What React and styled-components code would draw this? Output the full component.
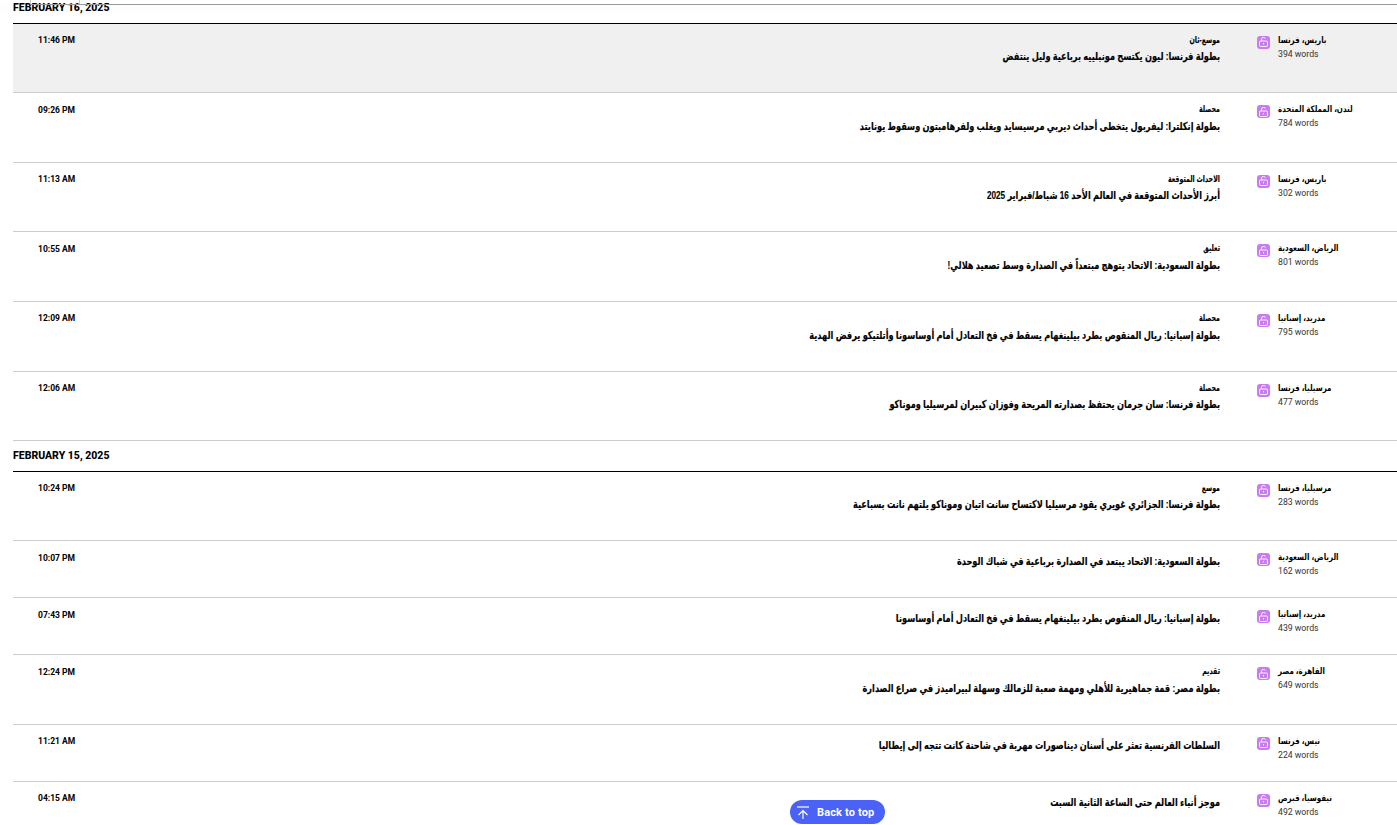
import React from 'react'
import styled, { createGlobalStyle } from 'styled-components'

const GlobalStyle = createGlobalStyle`
  html, body {
    margin: 0;
    padding: 0;
    background: #fff;
    overflow: hidden;
  }
`

const Viewport = styled.div`
  position: relative;
  height: 825px;
  overflow: hidden;
  font-family: Roboto, 'Open Sans', sans-serif;
  color: #000;
`

// sticky bar of the site, only its bottom edge is still visible
const StickyBar = styled.div`
  position: absolute;
  top: 0;
  left: 0;
  right: 0;
  height: 5px;
  padding-left: 30px;
  box-shadow: 0 4px 12px rgba(0, 0, 0, 0.03);
`

const StickyEdge = styled.div`
  height: 4px;
  border-bottom: 1px solid #999;
`

const StickyTab = styled.div`
  width: 50px;
  height: 4px;
  box-sizing: border-box;
  border-left: 1px solid #ccc;
  border-right: 1px solid #ccc;
`

const Content = styled.div`
  margin-top: -6.7px;
  padding-left: 13px;
`

const DateTitle = styled.h2`
  margin: 0;
  height: 29.4px;
  border-bottom: 1px solid #000;
  box-sizing: content-box;
  font-size: 10.5px;
  font-weight: 800;
  line-height: 30px;
  text-transform: uppercase;
`

const Row = styled.div`
  display: grid;
  grid-template-columns: 60px 1122px 58px 1fr;
  box-sizing: border-box;
  padding: 10px 0 0 25px;
  border-bottom: 1px solid #ccc;
  background: ${p => (p.$active ? '#f0f0f0' : 'transparent')};
`

const Time = styled.div`
  padding-top: 0.4px;
  white-space: nowrap;
  font-size: 8.5px;
  font-weight: 700;
  line-height: 13px;
`

const Story = styled.div`
  direction: rtl;
  padding-bottom: 27px;
  font-family: 'Liberation Sans', 'DejaVu Sans', sans-serif;
  font-weight: 700;
  -webkit-text-stroke: 0.15px #000;
`

const Category = styled.div`
  font-size: 9px;
  line-height: 12.6px;
  transform: scaleX(0.7);
  transform-origin: right center;
`

const Headline = styled.div`
  font-size: 11px;
  line-height: 17px;
  margin-top: 2px;
  white-space: nowrap;
  transform: scaleX(0.745);
  transform-origin: right center;
`

const Lock = styled.span`
  display: flex;
  align-items: center;
  justify-content: center;
  width: 13px;
  height: 13px;
  margin: 2px 0 0 37px;
  border-radius: 3px;
  background: #c97cf0;
  color: #fff;
`

const Meta = styled.div`
  min-width: 0;
`

const Place = styled.div`
  font-family: 'Liberation Sans', 'DejaVu Sans', sans-serif;
  font-size: 9px;
  font-weight: 700;
  line-height: 13px;
  white-space: nowrap;
  unicode-bidi: plaintext;
  text-align: left;
  transform: scaleX(0.79);
  transform-origin: left center;
`

const Words = styled.div`
  font-size: 8.7px;
  line-height: 15px;
  color: #333;
`

const BackToTop = styled.button`
  position: absolute;
  left: 790px;
  top: 800px;
  display: flex;
  align-items: center;
  gap: 8px;
  width: 95px;
  height: 24px;
  padding: 0 0 0 7px;
  border: 0;
  border-radius: 12px;
  background: #4a62f8;
  color: #fff;
  font-family: Roboto, sans-serif;
  font-size: 11px;
  font-weight: 700;
  letter-spacing: 0.15px;
  z-index: 3;
`

const LockIcon = () => (
  <svg width="9" height="10" viewBox="0 0 9 10" fill="none" stroke="currentColor" strokeWidth="0.9">
    <rect x="0.5" y="4" width="8" height="5.5" rx="1" />
    <path d="M2.5 4V2.2a2 2 0 0 1 3.9-.5" />
    <path d="M4.5 6v1.4" />
  </svg>
)

const UpIcon = () => (
  <svg width="12" height="13" viewBox="0 0 12 13" fill="none" stroke="currentColor" strokeWidth="1.2">
    <path d="M0 1h12" />
    <path d="M6 13V4.5M1.5 9L6 4.5 10.5 9" />
  </svg>
)

const feb16 = [
  { time: '11:46 PM', cat: 'موسع-ثان', title: 'بطولة فرنسا: ليون يكتسح مونبلييه برباعية وليل ينتفض', place: 'باريس، فرنسا', words: 394, active: true },
  { time: '09:26 PM', cat: 'محصلة', title: 'بطولة إنكلترا: ليفربول يتخطى أحداث ديربي مرسيسايد ويغلب ولفرهامبتون وسقوط يونايتد', place: 'لندن، المملكة المتحدة', words: 784 },
  { time: '11:13 AM', cat: 'الاحداث المتوقعة', title: 'أبرز الأحداث المتوقعة في العالم الأحد 16 شباط/فبراير 2025', place: 'باريس، فرنسا', words: 302 },
  { time: '10:55 AM', cat: 'تعليق', title: 'بطولة السعودية: الاتحاد يتوهج مبتعداً في الصدارة وسط تصعيد هلالي!', place: 'الرياض، السعودية', words: 801 },
  { time: '12:09 AM', cat: 'محصلة', title: 'بطولة إسبانيا: ريال المنقوص بطرد بيلينغهام يسقط في فخ التعادل أمام أوساسونا وأتلتيكو يرفض الهدية', place: 'مدريد، إسبانيا', words: 795 },
  { time: '12:06 AM', cat: 'محصلة', title: 'بطولة فرنسا: سان جرمان يحتفظ بصدارته المريحة وفوزان كبيران لمرسيليا وموناكو', place: 'مرسيليا، فرنسا', words: 477 },
]

const feb15 = [
  { time: '10:24 PM', cat: 'موسع', title: 'بطولة فرنسا: الجزائري غويري يقود مرسيليا لاكتساح سانت اتيان وموناكو يلتهم نانت بسباعية', place: 'مرسيليا، فرنسا', words: 283 },
  { time: '10:07 PM', title: 'بطولة السعودية: الاتحاد يبتعد في الصدارة برباعية في شباك الوحدة', place: 'الرياض، السعودية', words: 162 },
  { time: '07:43 PM', title: 'بطولة إسبانيا: ريال المنقوص بطرد بيلينغهام يسقط في فخ التعادل أمام أوساسونا', place: 'مدريد، إسبانيا', words: 439 },
  { time: '12:24 PM', cat: 'تقديم', title: 'بطولة مصر: قمة جماهيرية للأهلي ومهمة صعبة للزمالك وسهلة لبيراميدز في صراع الصدارة', place: 'القاهرة، مصر', words: 649 },
  { time: '11:21 AM', title: 'السلطات الفرنسية تعثر على أسنان ديناصورات مهربة في شاحنة كانت تتجه إلى إيطاليا', place: 'نيس، فرنسا', words: 224 },
  { time: '04:15 AM', title: 'موجز أنباء العالم حتى الساعة الثانية السبت', place: 'نيقوسيا، قبرص', words: 492 },
]

function StoryRow({ item }) {
  return (
    <Row $active={item.active}>
      <Time>{item.time}</Time>
      <Story>
        {item.cat && <Category>{item.cat}</Category>}
        <Headline>{item.title}</Headline>
      </Story>
      <Lock><LockIcon /></Lock>
      <Meta>
        <Place>{item.place}</Place>
        <Words>{item.words} words</Words>
      </Meta>
    </Row>
  )
}

export default function App() {
  return (
    <Viewport>
      <GlobalStyle />
      <StickyBar>
        <StickyEdge><StickyTab /></StickyEdge>
      </StickyBar>
      <Content>
        <DateTitle>February 16, 2025</DateTitle>
        {feb16.map(item => <StoryRow key={item.time} item={item} />)}
        <DateTitle>February 15, 2025</DateTitle>
        {feb15.map(item => <StoryRow key={item.time} item={item} />)}
      </Content>
      <BackToTop><UpIcon />Back to top</BackToTop>
    </Viewport>
  )
}
